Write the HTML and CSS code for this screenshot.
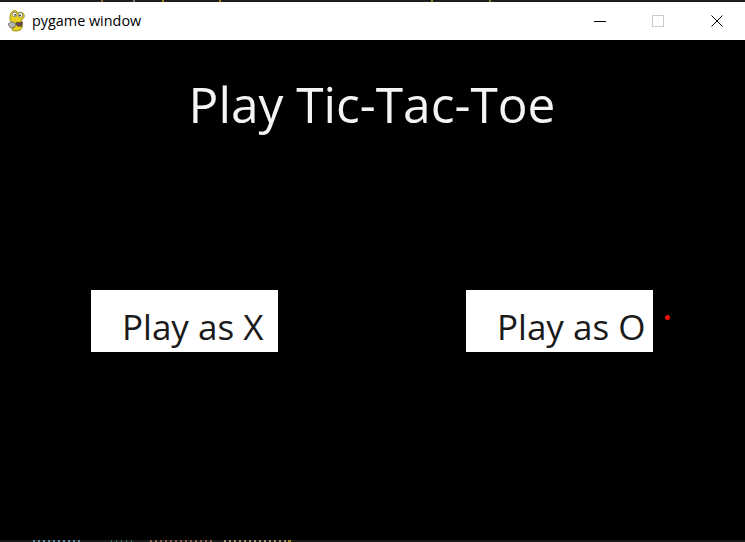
FILE: index.html
```html
<!DOCTYPE html>
<html lang="en">
<head>
<meta charset="utf-8">
<title>pygame window</title>
<link rel="stylesheet" href="styles.css">
</head>
<body>
<div class="window">
  <div class="edge">
    <span class="tick t1"></span><span class="tick t2"></span><span class="tick t3"></span><span class="tick t4"></span><span class="tick t5"></span><span class="tick t6"></span>
  </div>
  <header class="titlebar">
    <svg class="app-icon" width="20" height="22" viewBox="0 0 20 22">
      <path d="M6 1C8 0 10 1 11 3C13 1.500 16 2 17 4.500C18 7 16 9.500 14 10C16 13 16 17 14 19.500C11 21.500 7 21.500 5 20L6 15L3 10C2.500 6 3.500 2.500 6 1Z" fill="#e6d21e" stroke="#8a7a10" stroke-width=".8"/>
      <circle cx="7.500" cy="4.500" r="2.300" fill="#fff" stroke="#555" stroke-width=".6"/>
      <circle cx="13.500" cy="5" r="2.300" fill="#fff" stroke="#555" stroke-width=".6"/>
      <circle cx="8" cy="4.800" r=".9" fill="#222"/>
      <circle cx="13" cy="5.300" r=".9" fill="#222"/>
      <path d="M1 14L5 11.500L9 14L7 18L3 17.500Z" fill="#b4b4ae" stroke="#444" stroke-width=".6"/>
      <path d="M9 12.500L15.500 12L14.500 16.500L10 16Z" fill="#6a4a48" stroke="#333" stroke-width=".5"/>
    </svg>
    <span class="window-title">pygame window</span>
    <div class="controls">
      <span class="control">
        <svg width="12" height="12" viewBox="0 0 12 12"><path d="M0 6.500H12" stroke="#000" stroke-width="1"/></svg>
      </span>
      <span class="control">
        <svg width="12" height="12" viewBox="0 0 12 12"><rect x=".5" y=".5" width="11" height="11" fill="none" stroke="#ccc"/></svg>
      </span>
      <span class="control control-close">
        <svg width="12" height="12" viewBox="0 0 12 12"><path d="M.5 .5L11.500 11.500M11.500 .5L.5 11.500" stroke="#000" stroke-width="1"/></svg>
      </span>
    </div>
  </header>
  <main class="game">
    <h1 class="heading">Play Tic-Tac-Toe</h1>
    <div class="choices">
      <button class="choice">Play as X</button>
      <button class="choice">Play as O</button>
    </div>
    <span class="cursor-dot"></span>
  </main>
  <footer class="backdrop">
    <span class="code-bit blue"></span><span class="code-bit green"></span><span class="code-bit red"></span><span class="code-bit tan"></span><span class="code-bit yellow"></span>
  </footer>
</div>
</body>
</html>
```
FILE: styles.css
```css
* { box-sizing: border-box; }
html, body { margin: 0; padding: 0; background: #000; }
.window {
  width: 745px;
  height: 542px;
  display: flex;
  flex-direction: column;
  overflow: hidden;
  background: #000;
}
.edge { position: relative; height: 2px; background: #1e1e1e; flex: none; }
.tick { position: absolute; top: 0; width: 2px; height: 2px; }
.t1 { left: 101px; background: #8a6a30; }
.t2 { left: 133px; background: #6a8478; }
.t3 { left: 162px; background: #a08020; }
.t4 { left: 219px; background: #a08020; }
.t5 { left: 431px; background: #908020; }
.t6 { left: 489px; background: #808020; }
.titlebar {
  height: 38px;
  flex: none;
  background: #fff;
  display: flex;
  align-items: center;
  padding-left: 7px;
}
.app-icon { flex: none; }
.window-title {
  margin-left: 5px;
  font: 14.400px/20px "Open Sans", "Liberation Sans", sans-serif;
  color: #000;
}
.controls { margin-left: auto; display: flex; }
.control {
  width: 58px;
  height: 38px;
  display: flex;
  align-items: center;
  justify-content: center;
}
.control-close { padding-left: 2px; }
.game {
  position: relative;
  flex: 1;
  background: #000;
  font-family: "Open Sans", "Noto Sans", sans-serif;
  padding: 0 92px 0 91px;
}
.heading {
  margin: 30px 0 0;
  font-size: 49.600px;
  line-height: 68px;
  font-weight: 400;
  color: #f4f4f4;
  text-align: center;
}
.choices {
  margin-top: 152px;
  display: flex;
  justify-content: space-between;
}
.choice {
  width: 187px;
  height: 62px;
  border: 0;
  padding: 12px 0 0 31px;
  background: #fff;
  color: #1a1a1a;
  font-family: inherit;
  font-size: 35px;
  line-height: 48px;
  text-align: left;
  white-space: nowrap;
}
.cursor-dot {
  position: absolute;
  left: 665px;
  top: 275px;
  width: 5px;
  height: 5px;
  border-radius: 50%;
  background: #f01010;
}
.backdrop {
  height: 2px;
  flex: none;
  background: #1a1a1a;
  display: flex;
  padding-left: 33px;
}
.code-bit { height: 2px; background-size: 5px 2px; }
.blue { width: 48px; background-image: linear-gradient(90deg, #5a8aa4 40%, transparent 40%); }
.green { width: 24px; margin-left: 30px; background-image: linear-gradient(90deg, #34705a 30%, transparent 30%); }
.red { width: 64px; margin-left: 15px; background-image: linear-gradient(90deg, #8a6054 40%, transparent 40%); }
.tan { width: 62px; margin-left: 10px; background-image: linear-gradient(90deg, #9a8e6c 40%, transparent 40%); }
.yellow { width: 3px; margin-left: 2px; background: #a08828; }
```
